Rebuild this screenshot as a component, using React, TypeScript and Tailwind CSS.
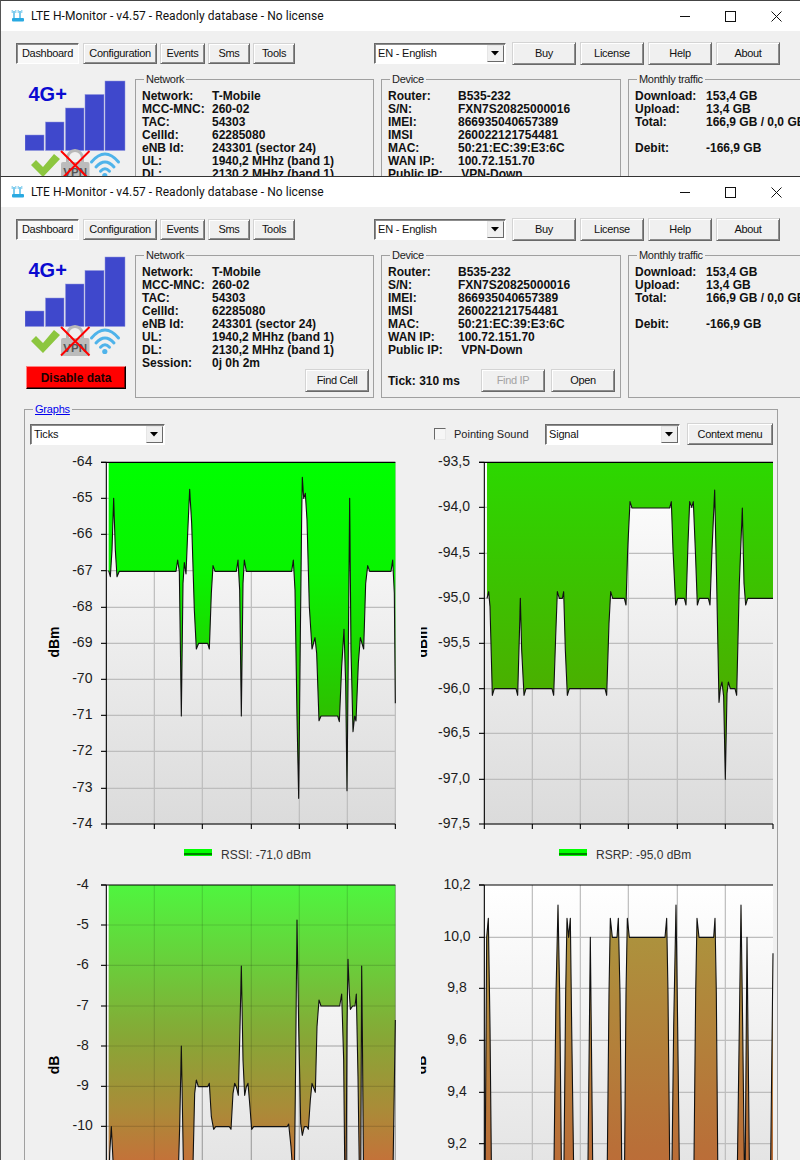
import React from "react";

type Pt = [number, number];

const btn3d =
  "flex items-center justify-center border border-t-[#d4d4d4] border-l-[#d4d4d4] border-r-[#696969] border-b-[#696969] bg-[#f0f0f0] shadow-[inset_1px_1px_0_#ffffff,inset_-1px_-1px_0_#8c8c8c] text-[11px] tracking-[-0.3px] text-[#111] shrink-0";

function Btn({ label, className = "", disabled = false }: { label: string; className?: string; disabled?: boolean }) {
  return (
    <button className={`${btn3d} ${disabled ? "text-[#a3a3a3]" : ""} ${className}`}>{label}</button>
  );
}

function Combo({ value, className = "" }: { value: string; className?: string }) {
  return (
    <div className={`flex items-stretch border border-t-[#696969] border-l-[#696969] border-r-white border-b-white bg-white shadow-[inset_1px_1px_0_#8c8c8c] shrink-0 ${className}`}>
      <span className="flex-1 pl-[3px] pt-[1px] text-[11px] leading-[17px] tracking-[-0.2px] text-[#111] whitespace-nowrap overflow-hidden">{value}</span>
      <span className="w-[17px] my-[1px] mr-[1px] flex items-center justify-center bg-[#f0f0f0] border border-t-[#e6e6e6] border-l-[#e6e6e6] border-r-[#696969] border-b-[#696969]">
        <svg width="9" height="5" viewBox="0 0 9 5"><path d="M0 0h8L4 4.6z" fill="#000" /></svg>
      </span>
    </div>
  );
}

function Rows({ rows, labelW }: { rows: [string, string][]; labelW: string }) {
  return (
    <div className="h-[103px] text-[12px] leading-[13px] font-bold text-[#111] whitespace-nowrap">
      {rows.map(([a, b], i) => (
        <div key={i} className="flex h-[13px]">
          <span className={labelW}>{a}</span>
          <span>{b}</span>
        </div>
      ))}
    </div>
  );
}

function Group({ title, className = "", children }: { title: string; className?: string; children: React.ReactNode }) {
  return (
    <fieldset className={`border border-[#a0a0a0] h-[149px] shrink-0 overflow-hidden ${className}`}>
      <legend className="ml-[8px] px-[2px] text-[11px] leading-[13px] tracking-[-0.3px] text-[#222]">{title}</legend>
      <div className="pl-[6px] pt-[4px]">{children}</div>
    </fieldset>
  );
}

function SignalArt() {
  return (
    <svg width="102" height="108" viewBox="24 250 102 108" className="block">
      {[
        [24, 311, 19],
        [44.5, 298, 18.5],
        [64.5, 284, 18.5],
        [84, 270.5, 19],
        [104, 257, 20],
      ].map(([x, y, w], i) => (
        <rect key={i} x={x} y={y} width={w} height={326.5 - y} fill="#3f48cc" stroke="#8f94dc" strokeWidth="0.5" />
      ))}
      <text x="27.5" y="276.5" fontSize="20" fontWeight="700" fill="#0a0ad0">4G+</text>
      <polygon points="30,341 35,336 42,343 53,330 59,335 42,353" fill="#8cc63f" />
      <path d="M66.5 338v-4a7.5 7.5 0 0 1 15 0v4" fill="none" stroke="#b8b8b8" strokeWidth="3" />
      <rect x="60" y="338" width="28.5" height="18" rx="2" fill="#bcbcbc" />
      <text x="74.2" y="352" fontSize="11.5" fontWeight="700" textAnchor="middle" fill="#555">VPN</text>
      <path d="M60 327L88.5 355.5M88.5 327L60 355.5" stroke="#ff0000" strokeWidth="2" />
      <g fill="none" stroke="#4fb3ea" strokeWidth="3" strokeLinecap="round">
        <path d="M90.5 338Q104 322 117.5 338" />
        <path d="M95 343Q104 333 113 343" />
        <path d="M99.5 347.2Q104 342.5 108.5 347.2" />
      </g>
      <circle cx="103.8" cy="351.5" r="2.6" fill="#4fb3ea" />
    </svg>
  );
}

function Dashboard() {
  return (
    <div className="bg-[#f0f0f0]">
      <div className="flex items-center pl-[15px] pt-[11px] h-[34px]">
        <button className="w-[63px] h-[21px] mr-[4px] flex items-center justify-center border border-t-[#696969] border-l-[#696969] border-r-white border-b-white bg-[#f8f8f8] shadow-[inset_1px_1px_0_#8c8c8c] text-[11px] tracking-[-0.3px] text-[#111]">Dashboard</button>
        <Btn label="Configuration" className="w-[74px] h-[21px] mr-[3px]" />
        <Btn label="Events" className="w-[45px] h-[21px] mr-[3px]" />
        <Btn label="Sms" className="w-[42px] h-[21px] mr-[3px]" />
        <Btn label="Tools" className="w-[42px] h-[21px]" />
        <Combo value="EN - English" className="w-[132px] h-[21px] ml-[79px]" />
        <Btn label="Buy" className="w-[64px] h-[23px] ml-[6px]" />
        <Btn label="License" className="w-[64px] h-[23px] ml-[4px]" />
        <Btn label="Help" className="w-[64px] h-[23px] ml-[4px]" />
        <Btn label="About" className="w-[64px] h-[23px] ml-[4px]" />
      </div>
      <div className="flex mt-[8px]">
        <div className="w-[134px] pl-[24px] pt-[1px] shrink-0">
          <SignalArt />
          <button className="mt-[8px] ml-[1px] w-[100px] h-[23px] flex items-center justify-center bg-[#ff0000] border border-t-[#ff8080] border-l-[#ff8080] border-r-black border-b-black shadow-[inset_-1px_-1px_0_#800000] text-[12px] font-bold text-[#200000]">Disable data</button>
        </div>
        <Group title="Network" className="w-[239px]">
          <Rows
            labelW="w-[70px]"
            rows={[
              ["Network:", "T-Mobile"],
              ["MCC-MNC:", "260-02"],
              ["TAC:", "54303"],
              ["CellId:", "62285080"],
              ["eNB Id:", "243301 (sector 24)"],
              ["UL:", "1940,2 MHhz (band 1)"],
              ["DL:", "2130,2 MHhz (band 1)"],
              ["Session:", "0j 0h 2m"],
            ]}
          />
          <div className="flex justify-end pr-[4px]">
            <Btn label="Find Cell" className="w-[64px] h-[23px]" />
          </div>
        </Group>
        <Group title="Device" className="w-[240px] ml-[7px]">
          <Rows
            labelW="w-[70px]"
            rows={[
              ["Router:", "B535-232"],
              ["S/N:", "FXN7S20825000016"],
              ["IMEI:", "866935040657389"],
              ["IMSI", "260022121754481"],
              ["MAC:", "50:21:EC:39:E3:6C"],
              ["WAN IP:", "100.72.151.70"],
              ["Public IP:", "\u00A0VPN-Down"],
            ]}
          />
          <div className="flex items-center">
            <span className="text-[12px] font-bold text-[#111] w-[93px]">Tick: 310 ms</span>
            <Btn label="Find IP" disabled className="w-[64px] h-[23px]" />
            <Btn label="Open" className="w-[64px] h-[23px] ml-[6px]" />
          </div>
        </Group>
        <Group title="Monthly traffic" className="w-[158px] ml-[7px] border-r-0">
          <Rows
            labelW="w-[71px]"
            rows={[
              ["Download:", "153,4 GB"],
              ["Upload:", "13,4 GB"],
              ["Total:", "166,9 GB / 0,0 GB"],
              ["\u00A0", ""],
              ["Debit:", "-166,9 GB"],
            ]}
          />
        </Group>
      </div>
    </div>
  );
}

function TitleBar() {
  return (
    <div className="h-[30px] bg-white flex items-center relative shrink-0">
      <svg width="14" height="14" viewBox="0 0 14 14" className="ml-[10px] mr-[6px] shrink-0">
        <rect x="1" y="9" width="12" height="3.5" rx="1" fill="#29a9e1" />
        <path d="M3 9V2M9 9V2" stroke="#29a9e1" strokeWidth="1.2" />
        <path d="M1.2 1v3M4.8 1v3M7.2 1v3M10.8 1v3" stroke="#6fc6ec" strokeWidth="1" />
      </svg>
      <span className="font-['Roboto'] text-[12px] text-[#111] tracking-[0.05px] whitespace-nowrap">LTE H-Monitor - v4.57 - Readonly database - No license</span>
      <div className="ml-auto flex items-center">
        <svg width="10" height="10" viewBox="0 0 10 10" className="mr-[35px]"><path d="M0 5.5h10" stroke="#111" /></svg>
        <svg width="11" height="11" viewBox="0 0 11 11" className="mr-[35px]"><rect x="0.5" y="0.5" width="10" height="10" fill="none" stroke="#111" /></svg>
        <svg width="11" height="11" viewBox="0 0 11 11" className="mr-[18px]"><path d="M0.5 0.5l10 10M10.5 0.5l-10 10" stroke="#111" /></svg>
      </div>
    </div>
  );
}

function polyline(p: Pt[]) {
  return p.map(([x, y]) => `${(x / 3).toFixed(2)},${(y / 3).toFixed(2)}`).join(" ");
}

type ChartProps = {
  id: string;
  width: number;
  height: number;
  left: number;
  right: number;
  top: number;
  bottom: number;
  gradBottom: number;
  labelX: number;
  unit: string;
  unitX: number;
  unitY: number;
  ticks: [string, number][];
  verts: number[];
  points: Pt[];
  stops: [string, string][];
  fillDown?: boolean;
  overlayGrid?: boolean;
  axisBottom?: boolean;
  legend?: { text: string; swatchX: number; textX: number };
};

function Chart(c: ChartProps) {
  const first = c.points[0];
  const last = c.points[c.points.length - 1];
  const edge = c.fillDown ? 1400 : c.top;
  const area = [[first[0], edge] as Pt, ...c.points, [last[0], edge] as Pt];
  const Grid = ({ op }: { op: number }) => (
    <g stroke={op < 1 ? "#000" : "#bdbdbd"} strokeOpacity={op < 1 ? op : 1} strokeWidth="1.2">
      {c.ticks.slice(1).map(([, y], i) => (
        <line key={i} x1={c.left / 3} x2={c.right / 3} y1={y / 3} y2={y / 3} />
      ))}
      {c.verts.map((x, i) => (
        <line key={i} x1={x / 3} x2={x / 3} y1={c.top / 3} y2={c.bottom / 3} />
      ))}
    </g>
  );
  return (
    <svg width={c.width} height={c.height} className="block overflow-hidden">
      <defs>
        <linearGradient id={`${c.id}-bg`} gradientUnits="userSpaceOnUse" x1="0" x2="0" y1={c.top / 3} y2={c.gradBottom / 3}>
          <stop offset="0" stopColor="#ffffff" />
          <stop offset="1" stopColor="#dbdbdb" />
        </linearGradient>
        <linearGradient id={`${c.id}-fill`} gradientUnits="userSpaceOnUse" x1="0" x2="0" y1={c.top / 3} y2={c.gradBottom / 3}>
          {c.stops.map(([o, col], i) => (
            <stop key={i} offset={o} stopColor={col} />
          ))}
        </linearGradient>
      </defs>
      <rect x={c.left / 3} y={c.top / 3} width={(c.right - c.left) / 3} height={(c.bottom - c.top) / 3} fill={`url(#${c.id}-bg)`} />
      <Grid op={1} />
      <polygon points={polyline(area)} fill={`url(#${c.id}-fill)`} />
      {c.overlayGrid && <Grid op={0.13} />}
      <polyline points={polyline(c.points)} fill="none" stroke="#111" strokeWidth="1.1" strokeLinejoin="round" />
      <g stroke="#000" strokeWidth="1.1" fill="none">
        <path d={`M${c.left / 3} ${c.top / 3}V${c.bottom / 3}`} />
        {c.axisBottom && <path d={`M${c.left / 3} ${c.bottom / 3}H${c.right / 3}`} />}
        <path d={`M${(c.left - 16) / 3} ${c.top / 3}H${c.right / 3}`} />
        {c.ticks.map(([, y], i) => (
          <path key={i} d={`M${(c.left - 16) / 3} ${y / 3}H${c.left / 3}`} />
        ))}
        {c.axisBottom &&
          [c.left, ...c.verts, ...(c.verts.length === 5 && c.right !== c.verts[5] ? [c.right] : [])].map((x, i) => (
            <path key={i} d={`M${x / 3} ${c.bottom / 3}v5`} />
          ))}
      </g>
      <g fontSize="14" fill="#1c1c1c" textAnchor="middle">
        {c.ticks.map(([t, y], i) => (
          <text key={i} x={c.labelX / 3} y={y / 3 + 4}>{t}</text>
        ))}
      </g>
      <text
        x={c.unitX}
        y={c.unitY}
        fontSize="14"
        fontWeight="700"
        fill="#000"
        textAnchor="middle"
        transform={`rotate(-90 ${c.unitX} ${c.unitY})`}
      >
        {c.unit}
      </text>
      {c.legend && (
        <g>
          <rect x={c.legend.swatchX} y="399" width="28" height="7" fill="#00ff00" />
          <path d={`M${c.legend.swatchX} 404H${c.legend.swatchX + 28}`} stroke="#000" strokeWidth="1" />
          <text x={c.legend.textX} y="408.5" fontSize="12" fill="#333">{c.legend.text}</text>
        </g>
      )}
    </svg>
  );
}

const rssi: Pt[] = [[233,362],[238,380],[243,300],[248,145],[253,300],[258,380],[265,364],[435,364],[440,330],[445,365],[451,798],[456,400],[460,338],[465,372],[470,250],[476,118],[482,220],[490,480],[496,597],[503,580],[530,580],[535,597],[541,430],[546,347],[552,364],[616,364],[621,330],[626,420],[631,798],[636,400],[640,330],[646,364],[782,364],[787,330],[792,420],[798,800],[803,1045],[808,560],[812,200],[814,82],[818,145],[823,130],[828,210],[835,470],[843,597],[852,563],[857,610],[864,812],[870,798],[920,798],[925,815],[932,650],[939,538],[944,700],[948,1022],[952,600],[956,145],[960,600],[966,845],[971,798],[975,813],[982,640],[988,563],[998,597],[1004,400],[1010,347],[1016,364],[1080,364],[1085,330],[1090,430],[1093,760]];
const rsrp: Pt[] = [[198,445],[203,425],[207,470],[214,736],[220,716],[285,716],[290,736],[295,560],[298,445],[302,600],[309,736],[315,716],[393,716],[398,736],[404,560],[409,425],[415,445],[424,445],[428,425],[433,600],[439,736],[445,716],[552,716],[557,736],[564,520],[569,425],[575,445],[610,445],[615,465],[620,300],[627,155],[633,174],[746,174],[751,155],[756,300],[764,465],[770,445],[790,445],[795,465],[801,280],[806,155],[812,172],[817,155],[823,300],[829,465],[835,445],[862,445],[867,465],[873,300],[881,120],[887,400],[894,757],[898,716],[903,696],[908,740],[913,988],[918,730],[922,696],[928,716],[942,716],[947,736],[955,400],[964,174],[969,400],[974,465],[980,445],[1056,445]];
const rsrq: Pt[] = [[233,1000],[236,880],[241,800],[246,900],[250,1000],[440,1000],[446,800],[451,558],[457,900],[460,1000],[484,1000],[491,700],[496,660],[502,680],[530,680],[535,670],[541,770],[548,808],[554,800],[595,800],[600,808],[606,700],[611,670],[616,680],[622,706],[627,500],[631,318],[636,600],[641,706],[646,680],[651,670],[656,730],[662,808],[668,800],[768,800],[773,792],[780,860],[787,960],[790,960],[793,700],[798,180],[803,500],[809,790],[814,826],[820,800],[828,800],[832,808],[838,720],[843,670],[853,697],[858,500],[864,420],[870,438],[926,438],[932,402],[938,600],[942,1000],[945,1000],[948,500],[951,298],[955,400],[958,448],[965,438],[972,438],[976,402],[981,650],[986,1000],[989,1000],[992,318],[994,500],[998,1000],[1085,1000],[1093,480]];
const sinr: Pt[] = [[192,1000],[197,232],[202,175],[207,500],[212,1000],[398,1000],[405,400],[411,135],[416,400],[422,1000],[428,1000],[434,400],[438,175],[443,232],[448,175],[452,500],[459,1000],[500,1000],[508,232],[516,1000],[558,1000],[564,400],[568,175],[574,232],[588,232],[592,175],[597,400],[603,1000],[610,1000],[615,400],[619,175],[625,232],[732,232],[737,175],[741,400],[747,1000],[752,1000],[758,500],[765,135],[770,500],[776,1000],[818,1000],[824,400],[828,175],[834,232],[878,232],[882,175],[886,400],[891,1000],[948,1000],[955,500],[960,135],[965,500],[971,1000],[972,1000],[978,232],[986,1000],[1048,1000],[1056,280]];

const vLeft = [370, 514, 661, 805, 949, 1093];
const vRight = [334, 478, 622, 769, 913];

function Graphs() {
  return (
    <fieldset className="ml-[23px] mt-[5px] w-[754px] border border-[#a0a0a0] bg-[#f0f0f0]">
      <legend className="ml-[8px] px-[2px] text-[11px] leading-[13px] tracking-[-0.2px] text-[#0000ee] underline">Graphs</legend>
      <div className="flex items-center pl-[5px] pt-[7px] h-[29px]">
        <Combo value="Ticks" className="w-[135px] h-[21px]" />
        <span className="ml-[269px] w-[12px] h-[12px] border border-t-[#696969] border-l-[#696969] border-r-[#e8e8e8] border-b-[#e8e8e8] bg-[#f6f6f6] shrink-0" />
        <span className="ml-[8px] w-[91px] text-[11px] text-[#222] whitespace-nowrap">Pointing Sound</span>
        <Combo value="Signal" className="w-[135px] h-[21px]" />
        <Btn label="Context menu" className="w-[86px] h-[22px] ml-[7px]" />
      </div>
      <div className="grid grid-cols-[390px_353px] pl-[6px] pt-[5px]">
        <Chart
          id="rssi"
          width={370}
          height={410}
          left={226}
          right={1093}
          top={37}
          bottom={1122}
          gradBottom={1122}
          labelX={154}
          unit="dBm"
          unitX={28}
          unitY={192}
          axisBottom
          ticks={[["-64",37],["-65",145],["-66",253],["-67",362],["-68",472],["-69",580],["-70",688],["-71",796],["-72",904],["-73",1015],["-74",1122]]}
          verts={vLeft}
          points={rssi}
          stops={[["0","#00ff00"],["0.3","#08f400"],["0.72","#30bd00"],["1","#40a800"]]}
          legend={{ text: "RSSI: -71,0 dBm", swatchX: 153, textX: 190 }}
        />
        <Chart
          id="rsrp"
          width={353}
          height={410}
          left={190}
          right={1056}
          top={37}
          bottom={1122}
          gradBottom={1122}
          labelX={99}
          unit="dBm"
          unitX={6}
          unitY={192}
          axisBottom
          ticks={[["-93,5",37],["-94,0",172],["-94,5",310],["-95,0",445],["-95,5",580],["-96,0",716],["-96,5",850],["-97,0",988],["-97,5",1122]]}
          verts={[...vRight]}
          points={rsrp}
          stops={[["0","#2cd800"],["0.65","#4bae00"],["1","#5a9a00"]]}
          legend={{ text: "RSRP: -95,0 dBm", swatchX: 138, textX: 175 }}
        />
        <Chart
          id="rsrq"
          width={370}
          height={310}
          left={226}
          right={1093}
          top={75}
          bottom={1100}
          gradBottom={1200}
          labelX={155}
          unit="dB"
          unitX={28}
          unitY={205}
          ticks={[["-4",75],["-5",195],["-6",316],["-7",438],["-8",558],["-9",679],["-10",799],["-11",920]]}
          verts={vLeft}
          points={rsrq}
          overlayGrid
          stops={[["0","#4ff53f"],["0.2","#68d03b"],["0.4","#86a836"],["0.6","#aa8b38"],["0.8","#d0663a"],["1","#ec4438"]]}
        />
        <Chart
          id="sinr"
          width={353}
          height={310}
          left={190}
          right={1056}
          top={75}
          bottom={1100}
          gradBottom={1200}
          labelX={108}
          unit="dB"
          unitX={5}
          unitY={205}
          ticks={[["10,2",75],["10,0",232],["9,8",385],["9,6",541],["9,4",697],["9,2",851]]}
          verts={vRight}
          points={sinr}
          fillDown
          stops={[["0","#a89a40"],["0.2","#ae8e3c"],["0.7","#b96f38"],["1","#c86038"]]}
        />
      </div>
    </fieldset>
  );
}

export default function App() {
  return (
    <div className="w-[800px] h-[1160px] overflow-hidden bg-[#f0f0f0] font-['Liberation_Sans',Arial,sans-serif]">
      <div className="h-[176px] overflow-hidden border-t border-l border-t-[#444] border-l-[#555]">
        <TitleBar />
        <Dashboard />
      </div>
      <div className="h-[984px] overflow-hidden border-t border-l border-t-[#333] border-l-[#555]">
        <TitleBar />
        <Dashboard />
        <Graphs />
      </div>
    </div>
  );
}
